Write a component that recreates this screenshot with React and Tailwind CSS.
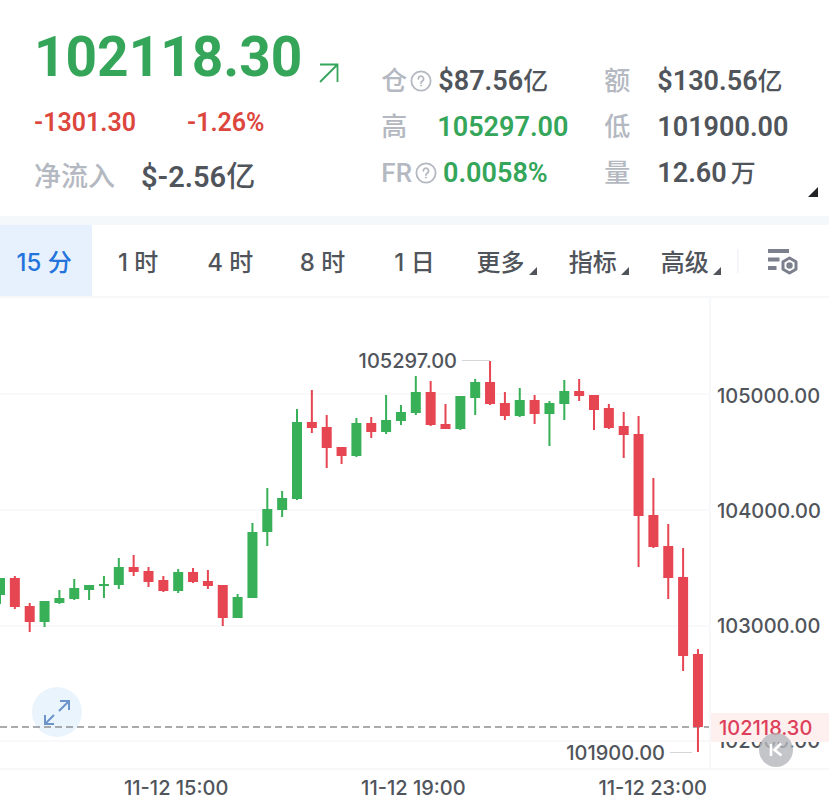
const PLOT_TOP = 298;
const STEP = 14.85;

// [up, high, bodyTop, bodyBottom, low]
const candles = [
  [1, 578, 578, 595, 604],
  [0, 576, 578, 607, 609],
  [0, 603, 606, 622, 632],
  [1, 601, 601, 622, 627],
  [1, 590, 598, 603, 604],
  [1, 579, 588, 599, 600],
  [1, 585, 585, 590, 600],
  [1, 576, 584, 586, 598],
  [1, 558, 567, 585, 589],
  [0, 555, 567, 572, 576],
  [0, 567, 571, 582, 587],
  [0, 576, 580, 591, 592],
  [1, 569, 572, 591, 593],
  [0, 568, 572, 582, 583],
  [0, 570, 581, 586, 589],
  [0, 585, 585, 618, 626],
  [1, 594, 597, 618, 618],
  [1, 523, 532, 598, 598],
  [1, 488, 509, 532, 546],
  [1, 491, 498, 510, 517],
  [1, 409, 422, 499, 500],
  [0, 390, 422, 428, 433],
  [0, 415, 427, 448, 468],
  [0, 447, 447, 456, 464],
  [1, 418, 423, 456, 457],
  [0, 417, 423, 432, 438],
  [1, 395, 420, 432, 434],
  [1, 405, 412, 421, 425],
  [1, 376, 392, 413, 415],
  [0, 381, 392, 425, 426],
  [0, 404, 424, 429, 429],
  [1, 396, 396, 429, 430],
  [1, 379, 382, 398, 415],
  [0, 361, 382, 404, 405],
  [0, 392, 403, 416, 420],
  [1, 388, 400, 416, 417],
  [0, 395, 400, 414, 424],
  [1, 401, 403, 414, 446],
  [1, 380, 391, 404, 420],
  [0, 379, 391, 396, 401],
  [0, 395, 395, 410, 430],
  [0, 404, 408, 428, 429],
  [0, 412, 426, 435, 458],
  [0, 416, 434, 516, 567],
  [0, 478, 515, 547, 548],
  [0, 524, 546, 578, 599],
  [0, 548, 577, 656, 671],
  [0, 649, 654, 727, 752],
];

const tabs = [
  { label: '15 分', active: true },
  { label: '1 时' },
  { label: '4 时' },
  { label: '8 时' },
  { label: '1 日' },
  { label: '更多', menu: true },
  { label: '指标', menu: true },
  { label: '高级', menu: true },
];

const stats = [
  { label: '仓', help: true, value: '$87.56', unit: '亿' },
  { label: '额', value: '$130.56', unit: '亿' },
  { label: '高', value: '105297.00', up: true },
  { label: '低', value: '101900.00' },
  { label: 'FR', help: true, value: '0.0058%', up: true },
  { label: '量', value: '12.60', unit: '万', spaced: true },
];

const prices = ['105000.00', '104000.00', '103000.00', '102000.00'];
const times = ['11-12 15:00', '11-12 19:00', '11-12 23:00'];

function Corner({ className }) {
  return (
    <svg viewBox="0 0 10 10" className={className} fill="currentColor" aria-hidden="true">
      <path d="M10 0V10H0Z" />
    </svg>
  );
}

function TrendIcon() {
  return (
    <svg viewBox="0 0 22 22" className="mb-1.5 size-[22px]" fill="none" stroke="currentColor" strokeWidth="1.8" aria-hidden="true">
      <path d="M2 2.5H19.5V20M19.5 2.5L2 20" />
    </svg>
  );
}

function HelpIcon() {
  return (
    <svg viewBox="0 0 22 22" className="size-[22px] shrink-0" fill="none" stroke="currentColor" strokeWidth="1.8" strokeLinecap="round" aria-hidden="true">
      <circle cx="11" cy="11" r="9.6" />
      <path d="M8.4 8.8a2.6 2.6 0 1 1 4 2.2c-.9.6-1.4 1-1.4 2" />
      <circle cx="11" cy="15.6" r=".6" fill="currentColor" strokeWidth=".8" />
    </svg>
  );
}

function SettingsIcon() {
  return (
    <svg viewBox="0 0 32 28" className="h-7 w-8" fill="none" stroke="currentColor" aria-hidden="true">
      <path d="M1 3H22M1 11.5H12.500M1 20H9.500" strokeWidth="4" />
      <path d="M22.500 10L29 13.700V21.300L22.500 25L16 21.300V13.700Z" strokeWidth="3" strokeLinejoin="round" />
      <circle cx="22.500" cy="17.500" r="3.200" fill="currentColor" stroke="none" />
    </svg>
  );
}

function Header() {
  return (
    <header className="relative flex h-[216px] font-['Roboto','Noto_Sans_CJK_SC',sans-serif] font-semibold text-[#50545b]">
      <div className="w-[46%] shrink-0 pt-6 pl-[34px]">
        <div className="flex items-end gap-4 text-[#34a559]">
          <span className="text-[55px] leading-[66px] font-bold">102118.30</span>
          <TrendIcon />
        </div>
        <div className="mt-[17px] flex gap-[51px] text-[25px] leading-8 text-[#dc463d]">
          <span>-1301.30</span>
          <span>-1.26%</span>
        </div>
        <div className="mt-5 flex items-center gap-[26px] leading-9">
          <span className="text-[27px] font-medium text-[#b4b8c1]">净流入</span>
          <span className="text-[29px]">
            $-2.56<span className="font-medium">亿</span>
          </span>
        </div>
      </div>
      <dl className="grid flex-1 grid-cols-[223px_1fr] content-start pt-[58px]">
        {stats.map((s) => (
          <div key={s.label} className="flex h-[46px] items-center whitespace-nowrap">
            <dt className={`flex items-center gap-[3px] pr-1.5 text-[26px] font-medium text-[#b4b8c1] ${s.help || s.up ? 'min-w-14' : 'min-w-[53px]'}`}>
              {s.label}
              {s.help && <HelpIcon />}
            </dt>
            <dd className={`text-[27px] ${s.up ? 'text-[#34a559]' : ''}`}>
              {s.value}
              {s.unit && <span className={`text-[25px] font-medium ${s.spaced ? 'ml-1' : ''}`}>{s.unit}</span>}
            </dd>
          </div>
        ))}
      </dl>
      <Corner className="absolute right-[11px] bottom-[19px] size-2.5 text-[#222326]" />
    </header>
  );
}

function Toolbar() {
  return (
    <nav className="grid h-[73px] grid-cols-9 border-b-2 border-[#f7f8fa] text-2xl font-medium text-[#50545b]">
      {tabs.map((tab) => (
        <button
          key={tab.label}
          type="button"
          className={`flex items-center justify-center gap-1 pt-1 whitespace-nowrap ${tab.active ? 'bg-[#e6f1fd] pr-1 text-[#2373dc]' : ''}`}
        >
          {tab.label}
          {tab.menu && <Corner className="mt-4 size-2" />}
        </button>
      ))}
      <div className="flex items-center">
        <span className="h-6 w-0.5 bg-[#f5f6f9]" />
        <button type="button" aria-label="设置" className="flex flex-1 items-center justify-center pt-0.5 pr-0.5 text-[#7b808c]">
          <SettingsIcon />
        </button>
      </div>
    </nav>
  );
}

function Plot() {
  return (
    <svg
      viewBox={`0 ${PLOT_TOP} 709 470`}
      preserveAspectRatio="xMaxYMin slice"
      className="h-[470px] w-full text-xl font-medium"
    >
      {[394, 510, 626, 741].map((y) => (
        <path key={y} d={`M0 ${y}H709`} stroke="#f9f9fb" strokeWidth="2" />
      ))}
      <path d="M462 360.5H490M670 752.5H692" stroke="#d4d6da" />
      <circle cx="57" cy="712" r="25" fill="#eaf4fd" />
      <path
        d="M60 701H69V710M69 701L59 711M45 715V724H54M45 724L54 715"
        fill="none"
        stroke="#6d93cb"
        strokeWidth="2"
      />
      <path d="M0 727H709" stroke="#8f9093" strokeWidth="1.4" strokeDasharray="7 4" />
      {candles.map(([up, high, top, bottom, low], i) => (
        <g key={i} fill={up ? '#37b058' : '#e64552'}>
          <rect x={i * STEP - 1} y={high} width="2" height={low - high} />
          <rect x={i * STEP - 5} y={top} width="10" height={bottom - top} />
        </g>
      ))}
      <text x="457" y="368" textAnchor="end" fill="#50545b">105297.00</text>
      <text x="665" y="760" textAnchor="end" fill="#50545b">101900.00</text>
    </svg>
  );
}

function PriceAxis() {
  return (
    <div className="relative w-[120px] shrink-0 border-l-2 border-[#f7f8fa] pt-10 pl-1.5 text-xl">
      {prices.map((p) => (
        <div key={p} className="flex h-[115px] items-center">{p}</div>
      ))}
      <div className="absolute top-[415px] right-0 left-0 flex h-[29px] items-center bg-[#fdf0ee] pl-2 text-[#dd3f5b]">
        102118.30
      </div>
      <svg viewBox="0 0 34 34" className="absolute top-[435px] right-9 size-[34px]" aria-hidden="true">
        <circle cx="17" cy="17" r="17" fill="#b4b6bc" fillOpacity=".8" />
        <path d="M12 11V23M22 10.500L15.500 17L22.500 22.500" fill="none" stroke="#fff" strokeWidth="2.6" />
      </svg>
    </div>
  );
}

export default function App() {
  return (
    <main className="overflow-hidden bg-white font-['Inter','Noto_Sans_CJK_SC',sans-serif] font-medium text-[#50545b]">
      <Header />
      <div className="h-[9px] bg-[#f5f8fb]" />
      <Toolbar />
      <section className="flex h-[470px]">
        <div className="min-w-0 flex-1">
          <Plot />
        </div>
        <PriceAxis />
      </section>
      <footer className="flex h-9 items-center justify-between border-t-2 border-[#f7f8fa] pt-0.5 pr-[122px] pl-[124px] text-xl">
        {times.map((t) => (
          <time key={t}>{t}</time>
        ))}
      </footer>
    </main>
  );
}
